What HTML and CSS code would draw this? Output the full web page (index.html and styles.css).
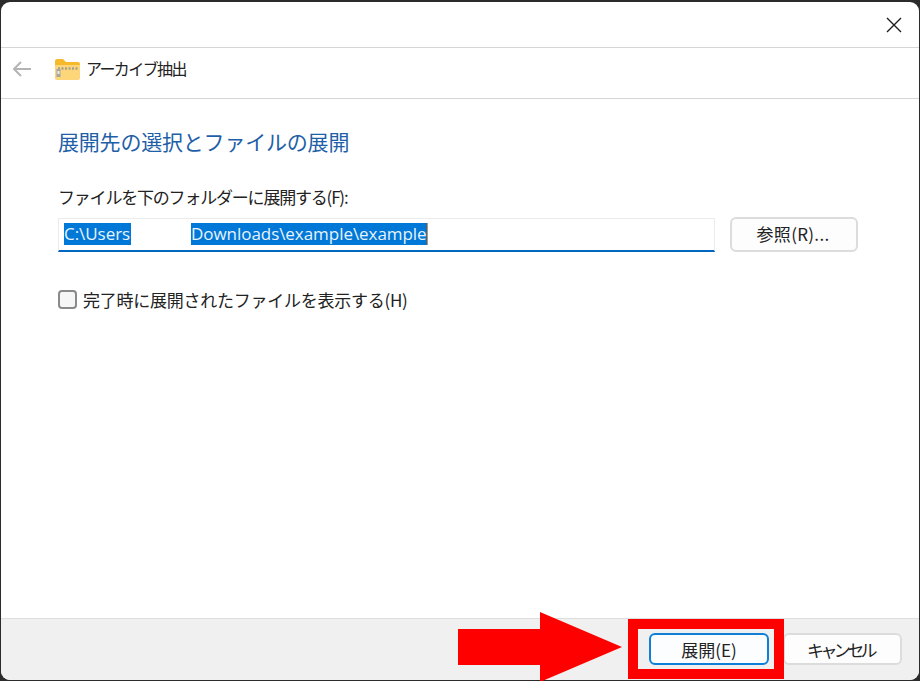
FILE: index.html
```html
<!DOCTYPE html>
<html lang="ja">
<head>
<meta charset="utf-8">
<title>アーカイブ抽出</title>
<link rel="stylesheet" href="styles.css">
</head>
<body>
<div class="window">
  <div class="titlebar">
    <svg class="close" width="16" height="16" viewBox="0 0 16 16"><path d="M1 1L15 15M15 1L1 15" stroke="#1c1c1c" stroke-width="1.4" fill="none"/></svg>
  </div>
  <div class="navbar">
    <svg class="back" width="20" height="16" viewBox="0 0 20 16"><path d="M19 8H2M9 1L2 8L9 15" stroke="#b4b4b4" stroke-width="2" fill="none"/></svg>
    <svg class="zip" width="25" height="22" viewBox="0 0 25 22">
      <path d="M0 3a2 2 0 0 1 2-2h6l3 3h12a2 2 0 0 1 2 2v3H0z" fill="#f6b92b"/>
      <path d="M0 7h25v13a2 2 0 0 1-2 2H2a2 2 0 0 1-2-2z" fill="#fcd678"/>
      <path d="M3 10.500H24" stroke="#a6a08c" stroke-width="2.500" stroke-dasharray="2 1.500" fill="none"/>
      <rect x="1.500" y="11" width="4" height="8" fill="#a5a5a5"/>
      <rect x="2.500" y="13" width="2" height="3" fill="#eeeeee"/>
    </svg>
    <span class="navtitle">アーカイブ抽出</span>
  </div>
  <main class="content">
    <h1 class="heading">展開先の選択とファイルの展開</h1>
    <label class="field-label">ファイルを下のフォルダーに展開する(F):</label>
    <div class="path-row">
      <div class="path-input">
        <span class="sel sel-first">C:\Users</span><span class="sel sel-last">Downloads\example\example</span>
      </div>
      <div class="btn browse">参照(R)...</div>
    </div>
    <div class="check-row">
      <span class="checkbox"></span>
      <span class="check-label">完了時に展開されたファイルを表示する(H)</span>
    </div>
  </main>
  <footer class="footer">
    <div class="btn primary">展開(E)</div>
    <div class="btn cancel">キャンセル</div>
  </footer>
</div>
<div class="highlight"></div>
<svg class="arrow" width="165" height="70" viewBox="0 0 165 70"><path d="M0 17H82V0L164 35L82 70V53H0z" fill="#ff0000"/></svg>
</body>
</html>
```
FILE: styles.css
```css
* { box-sizing: border-box; }
html, body { margin: 0; padding: 0; }
body {
  width: 920px;
  height: 681px;
  background: #2b2b2b;
  overflow: hidden;
  position: relative;
  font-family: "Noto Sans CJK JP", "Open Sans", sans-serif;
  color: #1a1a1a;
}
.window {
  margin: 2px 1px 0 1px;
  width: 918px;
  height: 678px;
  background: #fff;
  border-radius: 9px;
  overflow: hidden;
  display: flex;
  flex-direction: column;
}
.titlebar {
  height: 46px;
  border-bottom: 1px solid #d5d5d5;
  display: flex;
  justify-content: flex-end;
  align-items: center;
  padding: 0 17px 0 0;
  flex: none;
}
.navbar {
  height: 51px;
  border-bottom: 1px solid #d5d5d5;
  display: flex;
  align-items: center;
  padding: 0 0 9px 11px;
  flex: none;
}
.back { margin-right: 23px; }
.zip { margin-right: 6px; }
.navtitle {
  font-size: 16px;
  letter-spacing: -1.6px;
  color: #222;
  margin-top: -2px;
}
.content {
  flex: 1;
  padding: 25px 61px 0 57px;
}
.heading {
  margin: 0;
  font-size: 21px;
  line-height: 34px;
  font-weight: 400;
  color: #1f5fa8;
  letter-spacing: -0.2px;
}
.field-label {
  display: block;
  margin-top: 27px;
  font-size: 17px;
  line-height: 24px;
  letter-spacing: -1.2px;
  color: #222;
}
.path-row {
  display: flex;
  margin-top: 9px;
  gap: 15px;
  align-items: flex-start;
}
.path-input {
  width: 657px;
  height: 34px;
  background: #fff;
  border: 1px solid #ececec;
  border-bottom: 2px solid #0067c0;
  padding: 4px 0 0 5px;
  display: flex;
  font-family: "Open Sans", sans-serif;
  font-size: 17px;
  line-height: 22px;
  letter-spacing: -0.05px;
}
.sel { background: #0078d7; color: #e8f3fb; height: 22px; white-space: nowrap; }
.sel-first { width: 67px; }
.sel-last { margin-left: 60px; border-right: 1px solid #e8892c; }
.btn {
  display: flex;
  align-items: center;
  justify-content: center;
  background: #fdfdfd;
  border: 2px solid #dcdcdc;
  border-radius: 6px;
  font-size: 17px;
  color: #222;
}
.browse { width: 128px; height: 35px; margin-top: -1px; padding: 0 2px 3px 0; letter-spacing: 0.3px; }
.check-row {
  display: flex;
  align-items: center;
  margin-top: 35px;
  height: 24px;
}
.checkbox {
  width: 19px;
  height: 19px;
  border: 2px solid #8a8a8a;
  border-radius: 4px;
  background: #f6f6f6;
  margin-right: 6px;
}
.check-label { font-size: 17px; letter-spacing: -0.25px; color: #222; }
.footer {
  flex: none;
  height: 62px;
  background: #f0f0f0;
  border-top: 1px solid #dedede;
  display: flex;
  justify-content: flex-end;
  align-items: flex-start;
  gap: 14px;
  padding: 14px 17px 0 0;
}
.primary {
  width: 120px;
  height: 32px;
  border-color: #0f7fd8;
  background: #fbfdff;
}
.cancel { width: 119px; height: 32px; letter-spacing: -3.6px; padding-right: 4px; }
.highlight {
  position: absolute;
  left: 628px;
  top: 619px;
  width: 156px;
  height: 60px;
  border: 10px solid #ff0000;
}
.arrow {
  position: absolute;
  left: 458px;
  top: 612px;
}
```
